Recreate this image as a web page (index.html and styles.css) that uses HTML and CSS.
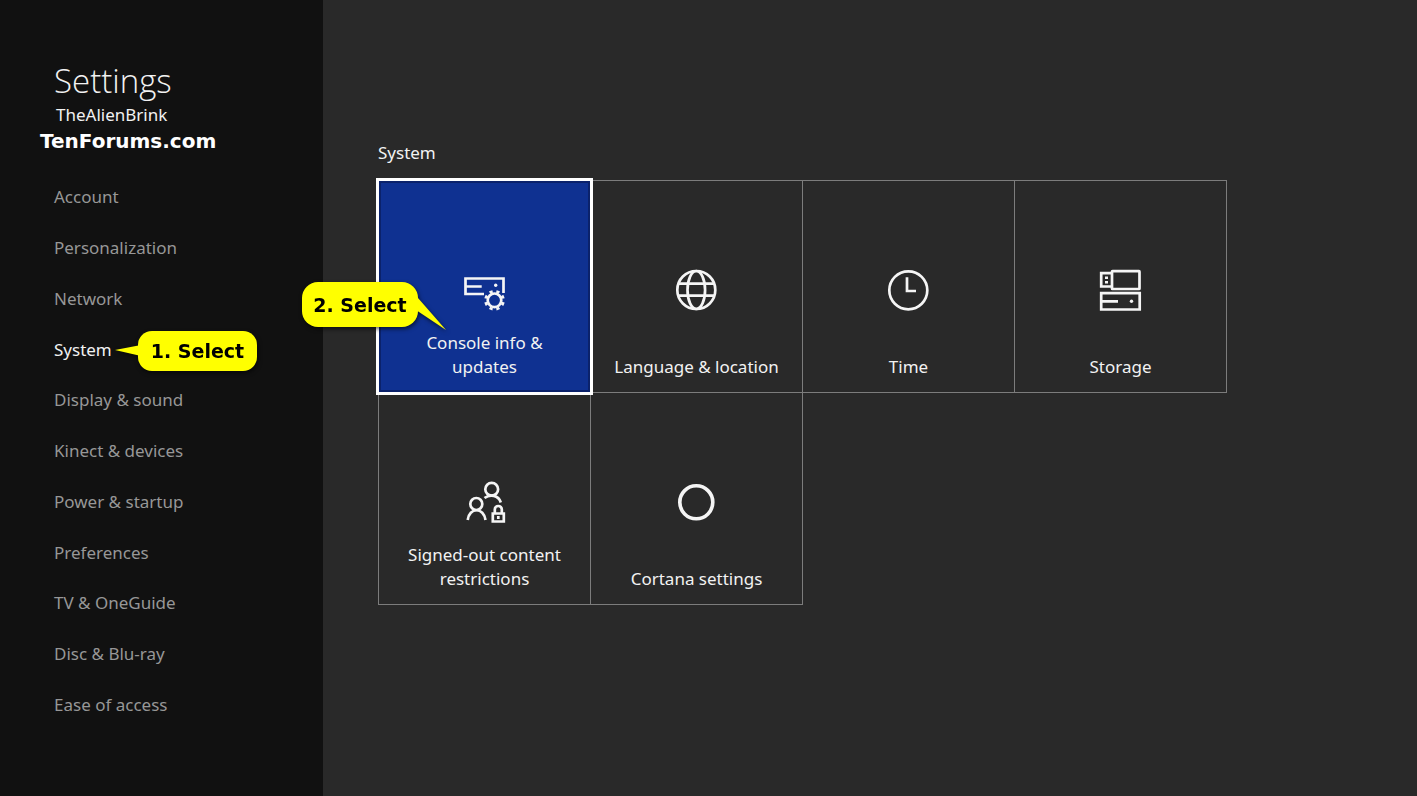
FILE: index.html
```html
<!DOCTYPE html>
<html lang="en">
<head>
<meta charset="utf-8">
<title>Settings</title>
<link rel="stylesheet" href="styles.css">
</head>
<body>
<div class="app">
  <aside class="sidebar">
    <header class="profile">
      <h1 class="title">Settings</h1>
      <p class="gamertag">TheAlienBrink</p>
      <p class="watermark">TenForums.com</p>
    </header>
    <nav class="menu" aria-label="Settings categories">
      <div class="menu-row"><button class="menu-item">Account</button></div>
      <div class="menu-row"><button class="menu-item">Personalization</button></div>
      <div class="menu-row"><button class="menu-item">Network</button></div>
      <div class="menu-row">
        <button class="menu-item current" aria-current="page">System</button>
        <div class="callout callout-first">
          <svg class="tail" width="26" height="12" viewBox="0 0 26 12" aria-hidden="true"><path d="M0 5L26 0V11Z"/></svg>
          1. Select
        </div>
      </div>
      <div class="menu-row"><button class="menu-item">Display &amp; sound</button></div>
      <div class="menu-row"><button class="menu-item">Kinect &amp; devices</button></div>
      <div class="menu-row"><button class="menu-item">Power &amp; startup</button></div>
      <div class="menu-row"><button class="menu-item">Preferences</button></div>
      <div class="menu-row"><button class="menu-item">TV &amp; OneGuide</button></div>
      <div class="menu-row"><button class="menu-item">Disc &amp; Blu-ray</button></div>
      <div class="menu-row"><button class="menu-item">Ease of access</button></div>
    </nav>
  </aside>
  <main class="content">
    <h2 class="section-title">System</h2>
    <div class="tiles">
      <div class="cell">
        <button class="tile selected">
          <svg class="icon" viewBox="1 0 48 48" aria-hidden="true">
            <path d="M24 28H5.500V12.500H43.500V27M5.500 20.500H21.700"/>
            <circle class="solid" cx="35.700" cy="19.300" r="1.700"/>
            <circle cx="34.500" cy="34.300" r="6.800"/>
            <circle cx="34.500" cy="34.300" r="9" pathLength="80" stroke-dasharray="4.600 5.400" stroke-dashoffset="-2.700"/>
          </svg>
          <span class="label">Console info &amp; updates</span>
        </button>
        <div class="callout callout-second">
          <svg class="tail" width="30" height="34" viewBox="0 0 30 34" aria-hidden="true"><path d="M0 0L2 2L30 34L0 14Z"/></svg>
          2. Select
        </div>
      </div>
      <div class="cell">
        <button class="tile">
          <svg class="icon" viewBox="1 0 48 48" aria-hidden="true">
            <circle cx="24.300" cy="24" r="19"/>
            <ellipse cx="24.300" cy="24" rx="8.800" ry="19"/>
            <path d="M6.500 17.700H42M6.500 29.700H42"/>
          </svg>
          <span class="label">Language &amp; location</span>
        </button>
      </div>
      <div class="cell">
        <button class="tile">
          <svg class="icon" viewBox="1 0 48 48" aria-hidden="true">
            <circle cx="24.300" cy="24.300" r="19"/>
            <path d="M23 11.300V25H32"/>
          </svg>
          <span class="label">Time</span>
        </button>
      </div>
      <div class="cell">
        <button class="tile">
          <svg class="icon" viewBox="1 0 48 48" aria-hidden="true">
            <rect x="16" y="5.200" width="27.500" height="17.800" rx="0.500"/>
            <path d="M16 7.200H5.200V20.500H16M5.200 27.200H43.700V43.500H5.200ZM5.200 35.300H22"/>
            <path class="solid" d="M9 10.500h3v2.500H9zM9 15h3v2.500H9z"/>
            <circle class="solid" cx="35.500" cy="35.300" r="1.700"/>
          </svg>
          <span class="label">Storage</span>
        </button>
      </div>
      <div class="cell">
        <button class="tile">
          <svg class="icon" viewBox="1 0 48 48" aria-hidden="true">
            <circle cx="31.700" cy="11.300" r="6.400"/>
            <path d="M24.500 20C30 16 38.500 17 40.800 24.500"/>
            <circle cx="16.300" cy="26" r="6"/>
            <path d="M7.700 42C9 29 24 29 25.500 42"/>
            <path d="M32.800 35.500H43.800V43.500H32.800ZM34.800 35.500V31.500A3.500 3.500 0 0 1 41.800 31.500V35.500M38.300 38V41"/>
          </svg>
          <span class="label">Signed-out content restrictions</span>
        </button>
      </div>
      <div class="cell">
        <button class="tile">
          <svg class="icon" viewBox="1 0 48 48" aria-hidden="true">
            <circle class="ring" cx="24.300" cy="24.300" r="16.500"/>
          </svg>
          <span class="label">Cortana settings</span>
        </button>
      </div>
    </div>
  </main>
</div>
</body>
</html>
```
FILE: styles.css
```css
* {
  box-sizing: border-box;
}

body {
  margin: 0;
  background: #292929;
  color: #f2f2f2;
  font-family: "Noto Sans", "Open Sans", sans-serif;
  font-size: 17px;
  line-height: 24px;
}

h1, h2, p {
  margin: 0;
  font-weight: 400;
}

button {
  margin: 0;
  border: 0;
  background: none;
  color: inherit;
  font: inherit;
  cursor: pointer;
}

.app {
  display: flex;
  min-height: 100vh;
}

.sidebar {
  display: flex;
  flex: 0 0 323px;
  flex-direction: column;
  padding: 58px 0 66px;
  background: #111111;
}

.profile {
  padding-left: 54px;
  padding-bottom: 16px;
}

.title {
  font-family: "Open Sans", "Noto Sans", sans-serif;
  font-size: 33px;
  font-weight: 300;
  line-height: 46px;
}

.gamertag {
  padding-left: 2px;
  line-height: 22px;
}

.watermark {
  margin-left: -14px;
  color: #ffffff;
  font-family: "DejaVu Sans", sans-serif;
  font-size: 20px;
  font-weight: 700;
  line-height: 30px;
}

.menu {
  display: flex;
  flex: 1;
  flex-direction: column;
}

.menu-row {
  position: relative;
  display: flex;
  flex: 1;
}

.menu-item {
  flex: 1;
  padding: 0 0 0 54px;
  color: #979797;
  text-align: left;
}

.menu-item.current {
  color: #f2f2f2;
}

.content {
  flex: 1;
  min-width: 0;
  padding: 141px 55px 40px;
}

.section-title {
  margin-bottom: 15px;
  font-size: 17px;
}

.tiles {
  display: grid;
  grid-template-columns: repeat(4, minmax(0, 212px));
  grid-auto-rows: minmax(212px, auto);
}

.cell {
  position: relative;
  display: flex;
}

.tile {
  display: flex;
  flex: 1;
  flex-direction: column;
  align-items: center;
  justify-content: space-between;
  margin: 0 -1px -1px 0;
  padding: 85px 20px 13px;
  border: 1px solid #7c7c7c;
}

.tile.selected {
  position: relative;
  z-index: 1;
  border-color: #ffffff;
  background: #0f3191;
  box-shadow: 0 0 0 2px #ffffff, inset 0 0 0 2px #0b226b;
}

.icon {
  width: 48px;
  height: 48px;
  fill: none;
  stroke: #f5f5f5;
  stroke-width: 2.7;
}

.icon .solid {
  fill: #f5f5f5;
  stroke: none;
}

.icon .ring {
  stroke-width: 3.6;
}

.callout {
  position: absolute;
  z-index: 2;
  display: flex;
  align-items: center;
  justify-content: center;
  background: #ffff00;
  color: #000000;
  font-family: "DejaVu Sans", sans-serif;
  font-size: 19px;
  font-weight: 700;
  white-space: nowrap;
  filter: drop-shadow(1px 2px 2px rgba(0, 0, 0, 0.6));
}

.callout-first {
  top: 7px;
  left: 138px;
  width: 119px;
  height: 40px;
  border-radius: 14px;
}

.callout-second {
  top: 102px;
  left: -76px;
  width: 116px;
  height: 45px;
  border-radius: 16px;
}

.tail {
  position: absolute;
  fill: #ffff00;
}

.callout-first .tail {
  top: 14px;
  left: -23px;
}

.callout-second .tail {
  top: 14px;
  left: 114px;
}
```
